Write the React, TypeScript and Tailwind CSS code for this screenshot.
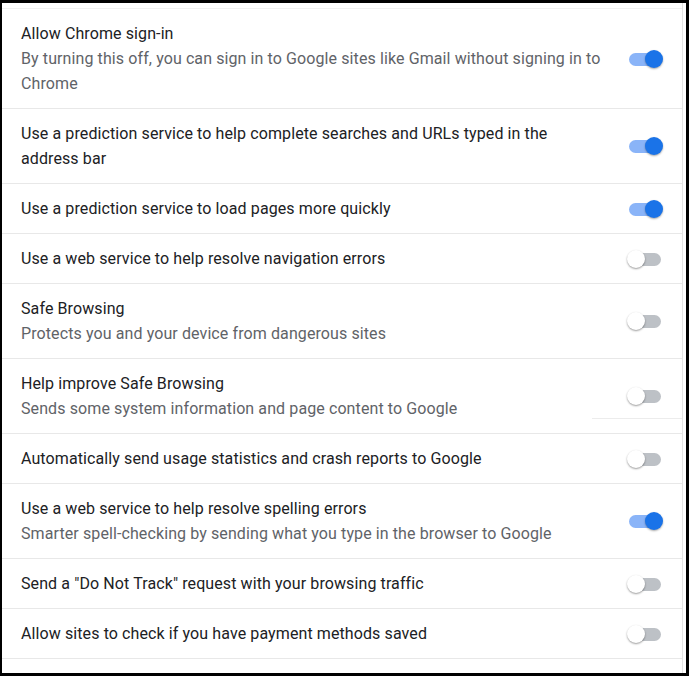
import React from "react";

type Row = { title: string[]; sub?: string[]; on: boolean; extra?: boolean };

const rows: Row[] = [
  {
    title: ["Allow Chrome sign-in"],
    sub: [
      "By turning this off, you can sign in to Google sites like Gmail without signing in to",
      "Chrome",
    ],
    on: true,
  },
  {
    title: [
      "Use a prediction service to help complete searches and URLs typed in the",
      "address bar",
    ],
    on: true,
  },
  { title: ["Use a prediction service to load pages more quickly"], on: true },
  { title: ["Use a web service to help resolve navigation errors"], on: false },
  {
    title: ["Safe Browsing"],
    sub: ["Protects you and your device from dangerous sites"],
    on: false,
  },
  {
    title: ["Help improve Safe Browsing"],
    sub: ["Sends some system information and page content to Google"],
    on: false,
    extra: true,
  },
  {
    title: ["Automatically send usage statistics and crash reports to Google"],
    on: false,
  },
  {
    title: ["Use a web service to help resolve spelling errors"],
    sub: ["Smarter spell-checking by sending what you type in the browser to Google"],
    on: true,
  },
  {
    title: ['Send a "Do Not Track" request with your browsing traffic'],
    on: false,
  },
  { title: ["Allow sites to check if you have payment methods saved"], on: false },
];

function Toggle({ on }: { on: boolean }) {
  return (
    <div className="relative w-[36px] h-[18px] shrink-0">
      <div
        className={
          on
            ? "absolute left-[2px] top-[3px] w-[30px] h-[13px] rounded-full bg-[#8ab4f8]"
            : "absolute left-[4px] top-[3px] w-[30px] h-[13px] rounded-full bg-[#bdc1c6]"
        }
      />
      <div
        className={
          on
            ? "absolute right-0 top-0 w-[18px] h-[18px] rounded-full bg-[#1a73e8] shadow-[0_1px_2px_rgba(0,0,0,0.35)]"
            : "absolute left-0 top-0 w-[18px] h-[18px] rounded-full bg-white shadow-[0_1px_2px_rgba(0,0,0,0.4)]"
        }
      />
    </div>
  );
}

export default function App() {
  return (
    <div
      className="w-[689px] h-[676px] bg-black pt-[3px] pb-[3px] pl-[2px] pr-[3px]"
      style={{ fontFamily: "Roboto, 'Liberation Sans', sans-serif" }}
    >
      <div className="w-full h-full bg-white pr-[3px]">
        <div className="h-full border-r border-[#e3e3e3] pt-[5px]">
          <div className="border-t border-[#f0f0f0]">
            {rows.map((r, i) => (
              <div
                key={i}
                className="relative flex items-center border-b border-[#e8e8e8] pl-[19px] pr-[19px] py-[12px]"
              >
                <div className="flex-1 text-[16px] tracking-[0.1px] leading-[25px]">
                  {r.title.map((t, j) => (
                    <div key={j} className="text-[#202124] whitespace-nowrap">
                      {t}
                    </div>
                  ))}
                  {r.sub?.map((t, j) => (
                    <div key={j} className="text-[#5f6368] whitespace-nowrap">
                      {t}
                    </div>
                  ))}
                </div>
                <Toggle on={r.on} />
                {r.extra && (
                  <div className="absolute right-0 bottom-[14px] w-[90px] h-px bg-[#ececec]" />
                )}
              </div>
            ))}
          </div>
        </div>
      </div>
    </div>
  );
}
